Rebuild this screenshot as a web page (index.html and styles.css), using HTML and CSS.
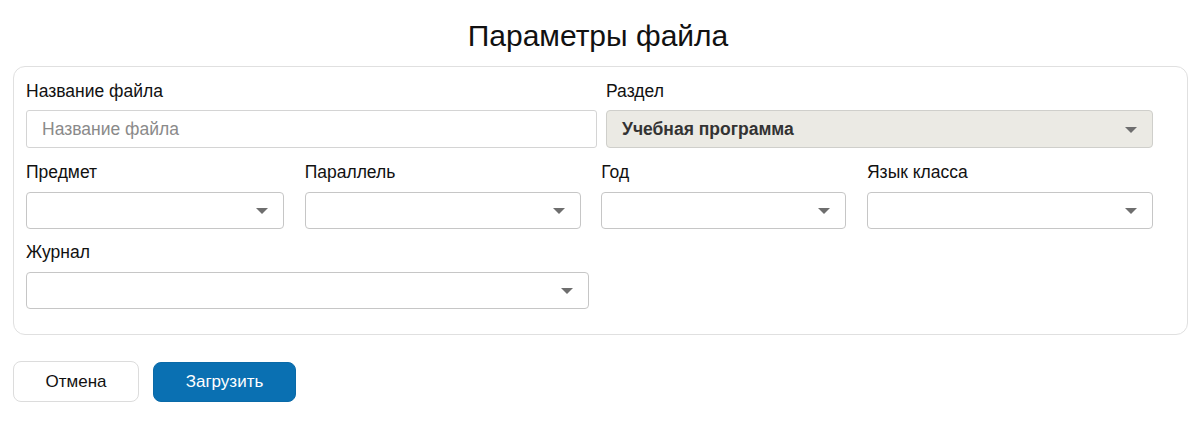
FILE: index.html
```html
<!DOCTYPE html>
<html lang="ru">
<head>
<meta charset="utf-8">
<title>Параметры файла</title>
<link rel="stylesheet" href="styles.css">
</head>
<body>
<h1 class="title">Параметры файла</h1>
<div class="card">
  <div class="row row-1">
    <div class="field">
      <label class="label">Название файла</label>
      <div class="input"><span class="placeholder">Название файла</span></div>
    </div>
    <div class="field">
      <label class="label">Раздел</label>
      <div class="select disabled"><span class="value">Учебная программа</span><span class="arrow"></span></div>
    </div>
  </div>
  <div class="row row-2">
    <div class="field">
      <label class="label">Предмет</label>
      <div class="select"><span class="value"></span><span class="arrow"></span></div>
    </div>
    <div class="field">
      <label class="label">Параллель</label>
      <div class="select"><span class="value"></span><span class="arrow"></span></div>
    </div>
    <div class="field">
      <label class="label">Год</label>
      <div class="select"><span class="value"></span><span class="arrow"></span></div>
    </div>
    <div class="field">
      <label class="label">Язык класса</label>
      <div class="select"><span class="value"></span><span class="arrow"></span></div>
    </div>
  </div>
  <div class="row row-3">
    <div class="field">
      <label class="label">Журнал</label>
      <div class="select"><span class="value"></span><span class="arrow"></span></div>
    </div>
  </div>
</div>
<div class="actions">
  <button class="btn btn-cancel">Отмена</button>
  <button class="btn btn-primary">Загрузить</button>
</div>
</body>
</html>
```
FILE: styles.css
```css
* { box-sizing: border-box; }
html, body { margin: 0; padding: 0; background: #fff; }
body {
  font-family: "Liberation Sans", Arial, sans-serif;
  color: #111;
  width: 1196px;
}
.title {
  margin: 0;
  height: 66px;
  padding-top: 18px;
  font-size: 30px;
  line-height: 36px;
  font-weight: normal;
  text-align: center;
  color: #111;
}
.card {
  margin-left: 13px;
  width: 1175px;
  height: 269px;
  border: 1px solid #e0e0e0;
  border-radius: 12px;
  padding: 14px 0 0 12px;
}
.row {
  display: grid;
  margin-bottom: 13px;
}
.row-1 { grid-template-columns: 571px 547px; column-gap: 9px; margin-bottom: 14px; }
.row-2 { grid-template-columns: 258px 276px 245px 286px; column-gap: 20.67px; }
.row-3 { grid-template-columns: 563px; }
.label {
  display: block;
  font-size: 17.5px;
  line-height: 20px;
  height: 20px;
  margin-bottom: 9px;
  color: #111;
}
.row-2 .label, .row-3 .label { margin-bottom: 10px; }
.input {
  height: 38px;
  border: 1px solid #d4d4d4;
  border-radius: 3px;
  padding: 0 15px;
  display: flex;
  align-items: center;
  font-size: 17.5px;
}
.placeholder { color: #8a8a8a; }
.select {
  height: 37px;
  border: 1px solid #c6c6c6;
  border-radius: 4px;
  padding: 0 15px 0 15px;
  display: flex;
  align-items: center;
  justify-content: space-between;
  font-size: 17.5px;
  background: #fff;
}
.select.disabled {
  height: 38px;
  background: #ebeae4;
  border-color: #cfcfcb;
}
.value { font-weight: bold; color: #333; }
.arrow {
  width: 0;
  height: 0;
  border-left: 6px solid transparent;
  border-right: 6px solid transparent;
  border-top: 6px solid #6e6e6e;
  margin-top: 1px;
}
.actions {
  display: flex;
  gap: 14px;
  margin: 26px 0 0 13px;
}
.btn {
  font-family: "Liberation Sans", Arial, sans-serif;
  font-size: 17px;
  height: 41px;
  border-radius: 8px;
  cursor: pointer;
}
.btn-cancel {
  width: 126px;
  background: #fff;
  border: 1px solid #dcdcdc;
  color: #111;
}
.btn-primary {
  width: 143px;
  height: 40px;
  margin-top: 1px;
  background: #0a70b2;
  border: 1px solid #0a6aa8;
  color: #fff;
}
```
